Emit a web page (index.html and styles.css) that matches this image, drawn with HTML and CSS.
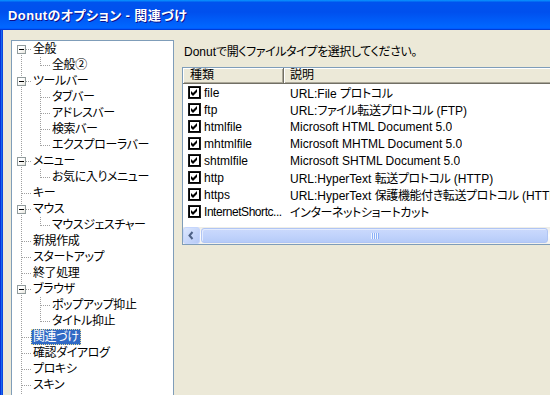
FILE: index.html
```html
<!DOCTYPE html>
<html lang="ja">
<head>
<meta charset="utf-8">
<title>Donutのオプション - 関連づけ</title>
<link rel="stylesheet" href="styles.css">
</head>
<body>
<div class="window">
  <div class="titlebar"><span class="title">Donutのオプション - 関連づけ</span></div>
  <div class="frame">
    <div class="tree">
      <div class="row"><span class="c r"><span class="box"></span></span><span class="label">全般</span></div>
      <div class="row"><span class="c v"></span><span class="c l"></span><span class="label">全般②</span></div>
      <div class="row"><span class="c t"><span class="box"></span></span><span class="label">ツールバー</span></div>
      <div class="row"><span class="c v"></span><span class="c t"></span><span class="label">タブバー</span></div>
      <div class="row"><span class="c v"></span><span class="c t"></span><span class="label">アドレスバー</span></div>
      <div class="row"><span class="c v"></span><span class="c t"></span><span class="label">検索バー</span></div>
      <div class="row"><span class="c v"></span><span class="c l"></span><span class="label">エクスプローラバー</span></div>
      <div class="row"><span class="c t"><span class="box"></span></span><span class="label">メニュー</span></div>
      <div class="row"><span class="c v"></span><span class="c l"></span><span class="label">お気に入りメニュー</span></div>
      <div class="row"><span class="c t"></span><span class="label">キー</span></div>
      <div class="row"><span class="c t"><span class="box"></span></span><span class="label">マウス</span></div>
      <div class="row"><span class="c v"></span><span class="c l"></span><span class="label">マウスジェスチャー</span></div>
      <div class="row"><span class="c t"></span><span class="label">新規作成</span></div>
      <div class="row"><span class="c t"></span><span class="label">スタートアップ</span></div>
      <div class="row"><span class="c t"></span><span class="label">終了処理</span></div>
      <div class="row"><span class="c t"><span class="box"></span></span><span class="label">ブラウザ</span></div>
      <div class="row"><span class="c v"></span><span class="c t"></span><span class="label">ポップアップ抑止</span></div>
      <div class="row"><span class="c v"></span><span class="c l"></span><span class="label">タイトル抑止</span></div>
      <div class="row"><span class="c t"></span><span class="label selected">関連づけ</span></div>
      <div class="row"><span class="c t"></span><span class="label">確認ダイアログ</span></div>
      <div class="row"><span class="c t"></span><span class="label">プロキシ</span></div>
      <div class="row"><span class="c t"></span><span class="label">スキン</span></div>
      <div class="row"><span class="c v"></span></div>
    </div>
    <div class="panel">
      <div class="prompt">Donut<span class="ja">で開くファイルタイプを選択してください。</span></div>
      <div class="listview">
        <div class="lv-header">
          <div class="hcell c1">種類</div>
          <div class="hcell c2">説明</div>
          <div class="hcell c3"></div>
        </div>
        <div class="lv-body">
          <div class="lv-row"><div class="cell c1"><svg class="chk" width="13" height="13" viewBox="0 0 13 13"><rect x="0.5" y="0.5" width="12" height="12" fill="#fff" stroke="#1c1c1c"/><rect x="1.5" y="1.5" width="10" height="10" fill="none" stroke="#000"/><polygon points="3,5 5,7 9,3 9,6 5,10 3,8" fill="#000"/></svg><span>file</span></div><div class="cell c2">URL:File <span class="ja">プロトコル</span></div></div>
          <div class="lv-row"><div class="cell c1"><svg class="chk" width="13" height="13" viewBox="0 0 13 13"><rect x="0.5" y="0.5" width="12" height="12" fill="#fff" stroke="#1c1c1c"/><rect x="1.5" y="1.5" width="10" height="10" fill="none" stroke="#000"/><polygon points="3,5 5,7 9,3 9,6 5,10 3,8" fill="#000"/></svg><span>ftp</span></div><div class="cell c2">URL:<span class="ja">ファイル転送プロトコル</span> (FTP)</div></div>
          <div class="lv-row"><div class="cell c1"><svg class="chk" width="13" height="13" viewBox="0 0 13 13"><rect x="0.5" y="0.5" width="12" height="12" fill="#fff" stroke="#1c1c1c"/><rect x="1.5" y="1.5" width="10" height="10" fill="none" stroke="#000"/><polygon points="3,5 5,7 9,3 9,6 5,10 3,8" fill="#000"/></svg><span>htmlfile</span></div><div class="cell c2">Microsoft HTML Document 5.0</div></div>
          <div class="lv-row"><div class="cell c1"><svg class="chk" width="13" height="13" viewBox="0 0 13 13"><rect x="0.5" y="0.5" width="12" height="12" fill="#fff" stroke="#1c1c1c"/><rect x="1.5" y="1.5" width="10" height="10" fill="none" stroke="#000"/><polygon points="3,5 5,7 9,3 9,6 5,10 3,8" fill="#000"/></svg><span>mhtmlfile</span></div><div class="cell c2">Microsoft MHTML Document 5.0</div></div>
          <div class="lv-row"><div class="cell c1"><svg class="chk" width="13" height="13" viewBox="0 0 13 13"><rect x="0.5" y="0.5" width="12" height="12" fill="#fff" stroke="#1c1c1c"/><rect x="1.5" y="1.5" width="10" height="10" fill="none" stroke="#000"/><polygon points="3,5 5,7 9,3 9,6 5,10 3,8" fill="#000"/></svg><span>shtmlfile</span></div><div class="cell c2">Microsoft SHTML Document 5.0</div></div>
          <div class="lv-row"><div class="cell c1"><svg class="chk" width="13" height="13" viewBox="0 0 13 13"><rect x="0.5" y="0.5" width="12" height="12" fill="#fff" stroke="#1c1c1c"/><rect x="1.5" y="1.5" width="10" height="10" fill="none" stroke="#000"/><polygon points="3,5 5,7 9,3 9,6 5,10 3,8" fill="#000"/></svg><span>http</span></div><div class="cell c2">URL:HyperText <span class="ja">転送プロトコル</span> (HTTP)</div></div>
          <div class="lv-row"><div class="cell c1"><svg class="chk" width="13" height="13" viewBox="0 0 13 13"><rect x="0.5" y="0.5" width="12" height="12" fill="#fff" stroke="#1c1c1c"/><rect x="1.5" y="1.5" width="10" height="10" fill="none" stroke="#000"/><polygon points="3,5 5,7 9,3 9,6 5,10 3,8" fill="#000"/></svg><span>https</span></div><div class="cell c2">URL:HyperText <span class="ja">保護機能付き転送プロトコル</span> (HTTPS)</div></div>
          <div class="lv-row"><div class="cell c1"><svg class="chk" width="13" height="13" viewBox="0 0 13 13"><rect x="0.5" y="0.5" width="12" height="12" fill="#fff" stroke="#1c1c1c"/><rect x="1.5" y="1.5" width="10" height="10" fill="none" stroke="#000"/><polygon points="3,5 5,7 9,3 9,6 5,10 3,8" fill="#000"/></svg><span class="trunc">InternetShortc...</span></div><div class="cell c2"><span class="ja">インターネットショートカット</span></div></div>
        </div>
        <div class="hscroll">
          <svg class="sb-btn" width="17" height="17" viewBox="0 0 17 17"><defs><linearGradient id="sbg" x1="0" y1="0" x2="1" y2="1"><stop offset="0" stop-color="#dde8fe"/><stop offset="1" stop-color="#b4c8f6"/></linearGradient></defs><rect x="0.5" y="0.5" width="16" height="16" rx="2.5" fill="url(#sbg)" stroke="#c6d6fc"/><path d="M9.5 5 L6.5 8.5 L9.5 12" fill="none" stroke="#4d6185" stroke-width="2"/></svg>
          <div class="sb-thumb"><span class="grip"></span></div>
        </div>
      </div>
    </div>
  </div>
</div>
</body>
</html>
```

FILE: styles.css
```css
html, body {
  margin: 0;
  padding: 0;
  background: #ece9d8;
}

body {
  font-family: "Liberation Sans", "Noto Sans CJK JP", sans-serif;
  font-feature-settings: "palt";
  font-size: 12px;
  color: #000;
}

.ja {
  letter-spacing: -0.4px;
}

.window {
  width: 550px;
  height: 395px;
  overflow: hidden;
  display: flex;
  flex-direction: column;
}

.titlebar {
  height: 30px;
  flex: none;
  box-sizing: border-box;
  padding: 0 0 1px 8px;
  display: flex;
  align-items: center;
  background: linear-gradient(180deg, #0997ff, #0053ee 8%, #0050ee 40%, #06f 88%, #06f 93%, #005bff 95%, #003dd7 96%, #003dd7);
}

.title {
  color: #fff;
  font-weight: bold;
  font-size: 13px;
  letter-spacing: 0.4px;
  white-space: nowrap;
  text-shadow: 1px 1px #0f1089;
}

.frame {
  flex: 1;
  min-height: 0;
  overflow: hidden;
  display: flex;
  align-items: flex-start;
  gap: 8px;
  padding: 10px 0 0 11px;
  background: linear-gradient(to right, #0831d9 0 1px, #166aee 1px 2px, #0c45e0 2px 3px, #ece9d8 3px);
}

/* ---------- tree ---------- */
.tree {
  --vd: repeating-linear-gradient(to bottom, #a0a0a0 0 1px, transparent 1px 2px);
  --hd: repeating-linear-gradient(to right, #a0a0a0 0 1px, transparent 1px 2px);
  width: 163px;
  height: 380px;
  flex: none;
  box-sizing: border-box;
  background: #fff;
  border: 1px solid #7f9db9;
}

.row {
  display: flex;
  height: 16px;
  white-space: nowrap;
}

.c {
  width: 19px;
  height: 16px;
  flex: none;
  box-sizing: border-box;
  padding: 4px 0 0 5px;
  background-repeat: no-repeat;
}

.c.v {
  background-image: var(--vd);
  background-size: 1px 16px;
  background-position: 9px 0;
}

.c.t {
  background-image: var(--vd), var(--hd);
  background-size: 1px 16px, 9px 1px;
  background-position: 9px 0, 10px 8px;
}

.c.l {
  background-image: var(--vd), var(--hd);
  background-size: 1px 9px, 9px 1px;
  background-position: 9px 0, 10px 8px;
}

.c.r {
  background-image: var(--vd), var(--hd);
  background-size: 1px 8px, 9px 1px;
  background-position: 9px 8px, 10px 8px;
}

.box {
  display: block;
  width: 9px;
  height: 9px;
  box-sizing: border-box;
  border: 1px solid #919b9c;
  background: linear-gradient(#000, #000) center / 5px 1px no-repeat, linear-gradient(135deg, #fff 40%, #e6e4dc);
}

.label {
  padding: 0 2px;
  line-height: 16px;
  height: 16px;
  box-sizing: border-box;
  letter-spacing: -0.4px;
}

.label.selected {
  background: #316ac5;
  color: #fff;
  outline: 1px dotted #e8dd9a;
  outline-offset: -1px;
}

/* ---------- right panel ---------- */
.panel {
  display: flex;
  flex-direction: column;
  padding-top: 4px;
  min-width: 0;
}

.prompt {
  height: 16px;
  line-height: 16px;
  padding-left: 2px;
  margin-bottom: 7px;
  white-space: nowrap;
}

.listview {
  width: 420px;
  flex: none;
  box-sizing: border-box;
  border: 1px solid #7f9db9;
  background: #fff;
}

.lv-header {
  display: flex;
  height: 16px;
}

.hcell {
  height: 16px;
  line-height: 15px;
  box-sizing: border-box;
  flex: none;
  background: #ece9d8;
  border-right: 1px solid #716f64;
  border-bottom: 1px solid #716f64;
  box-shadow: inset 1px 1px #fff, inset -1px -1px #aca899;
  white-space: nowrap;
}

.hcell.c1 {
  width: 101px;
  padding-left: 7px;
}

.hcell.c2 {
  width: 272px;
  padding-left: 6px;
}

.hcell.c3 {
  flex: 1;
  border-right: none;
}

.lv-body {
  height: 143px;
}

.lv-row {
  display: flex;
  height: 17px;
  align-items: center;
}

.cell {
  white-space: nowrap;
  overflow: hidden;
  flex: none;
}

.cell.c1 {
  width: 101px;
  box-sizing: border-box;
  padding-left: 5px;
  display: flex;
  align-items: center;
  gap: 3px;
}

.trunc {
  letter-spacing: -0.45px;
}

.chk {
  flex: none;
  display: block;
}

.cell.c2 {
  padding-left: 6px;
}

/* ---------- scrollbar ---------- */
.hscroll {
  height: 17px;
  display: flex;
  background: linear-gradient(#eeede5, #f3f1ec 2px, #fefefe 50%, #f3f1ec);
}

.sb-btn {
  display: block;
  flex: none;
}

.sb-thumb {
  width: 347px;
  height: 15px;
  margin: 1px 0 1px 1px;
  flex: none;
  box-sizing: border-box;
  border: 1px solid #b0c5f4;
  border-radius: 3px;
  background: linear-gradient(#cbd9fc, #c1d3fb 50%, #b6cbf8);
  box-shadow: inset 1px 1px #e3ebfe;
  display: flex;
  align-items: center;
  justify-content: center;
}

.grip {
  display: block;
  width: 8px;
  height: 6px;
  background: repeating-linear-gradient(to right, #eef4fe 0 1px, #8cb0f8 1px 2px);
}
```
